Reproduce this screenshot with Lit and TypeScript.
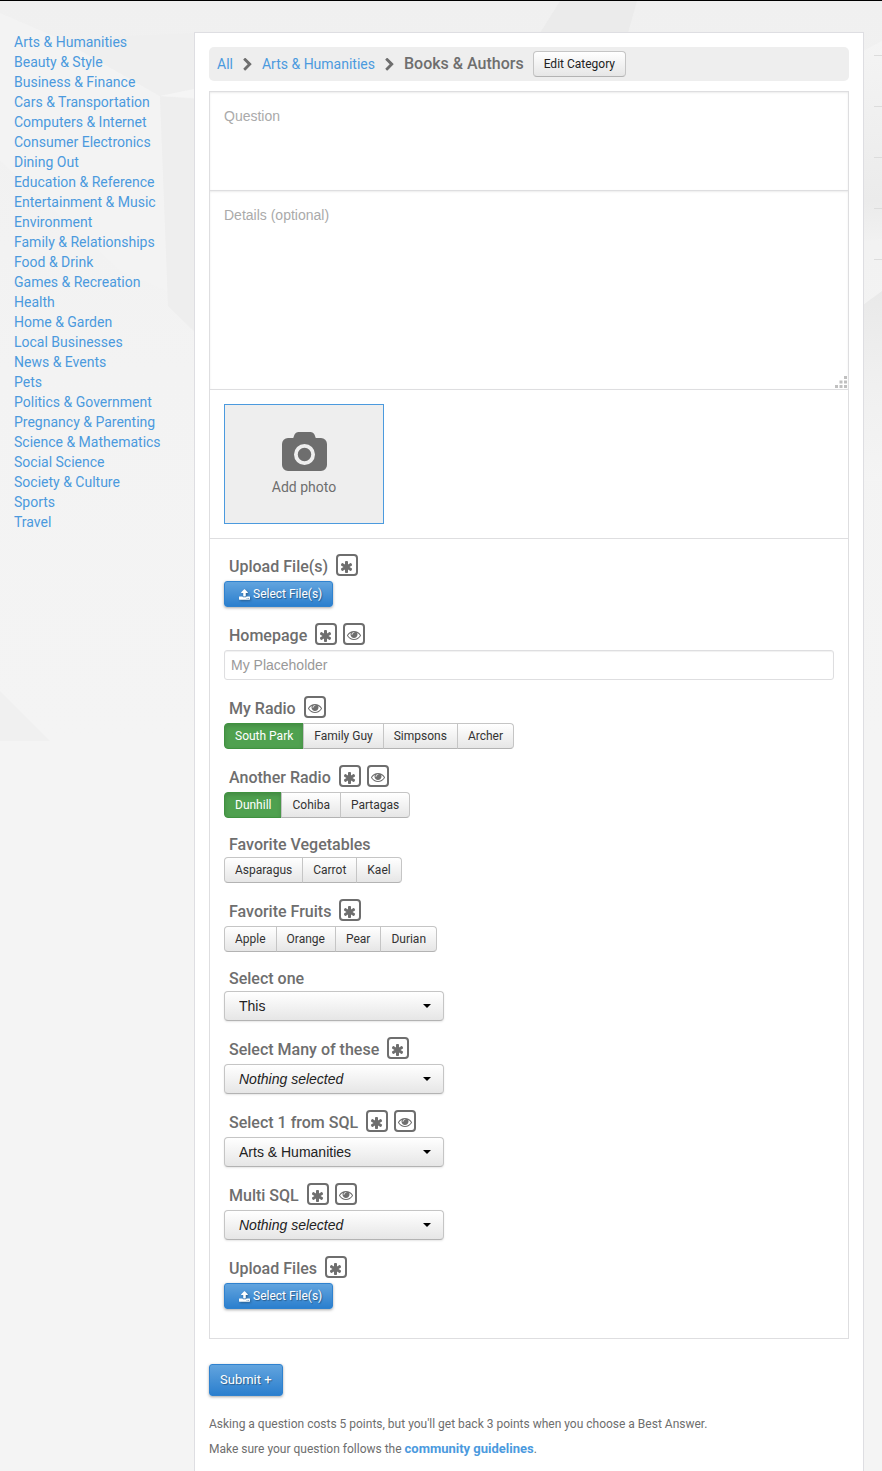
import { LitElement, html, css, svg, nothing } from "lit";
import { customElement, property, state } from "lit/decorators.js";

const CATEGORIES = [
  "Arts & Humanities", "Beauty & Style", "Business & Finance", "Cars & Transportation",
  "Computers & Internet", "Consumer Electronics", "Dining Out", "Education & Reference",
  "Entertainment & Music", "Environment", "Family & Relationships", "Food & Drink",
  "Games & Recreation", "Health", "Home & Garden", "Local Businesses", "News & Events",
  "Pets", "Politics & Government", "Pregnancy & Parenting", "Science & Mathematics",
  "Social Science", "Society & Culture", "Sports", "Travel",
];

const ICONS: Record<string, { box: string; d: string }> = {
  chevron: {
    box: "320 50 1100 1640",
    d: "M1363 877l-742 742q-19 19-45 19t-45-19l-166-166q-19-19-19-45t19-45l531-531-531-531q-19-19-19-45t19-45l166-166q19-19 45-19t45 19l742 742q19 19 19 45t-19 45z",
  },
  camera: {
    box: "-64 0 1920 1664",
    d: "M896 672q119 0 203.500 84.500t84.500 203.500-84.500 203.500-203.500 84.500-203.500-84.500-84.500-203.500 84.500-203.500 203.500-84.500zm704-416q106 0 181 75t75 181v896q0 106-75 181t-181 75h-1408q-106 0-181-75t-75-181v-896q0-106 75-181t181-75h224l51-136q19-49 69.500-84.500t103.500-35.500h512q53 0 103.500 35.500t69.500 84.500l51 136h224zm-704 1152q185 0 316.500-131.500t131.500-316.500-131.500-316.500-316.500-131.500-316.500 131.500-131.500 316.500 131.500 316.500 316.500 131.500z",
  },
  asterisk: {
    box: "192 128 1408 1536",
    d: "M1482 1050q46 26 59.500 77.500t-12.500 97.500l-64 110q-26 46-77.500 59.500t-97.500-12.500l-266-153v307q0 52-38 90t-90 38h-128q-52 0-90-38t-38-90v-307l-266 153q-46 26-97.500 12.500t-77.500-59.500l-64-110q-26-46-12.500-97.500t59.500-77.500l266-154-266-154q-46-26-59.500-77.500t12.500-97.500l64-110q26-46 77.500-59.500t97.500 12.500l266 153v-307q0-52 38-90t90-38h128q52 0 90 38t38 90v307l266-153q46-26 97.500-12.500t77.500 59.500l64 110q26 46 12.500 97.500t-59.500 77.500l-266 154z",
  },
  eye: {
    box: "0 384 1792 1152",
    d: "M1664 960q-152-236-381-353 61 104 61 225 0 185-131.500 316.500t-316.500 131.500-316.500-131.500-131.500-316.500q0-121 61-225-229 117-381 353 133 205 333.500 326.500t434.500 121.500 434.500-121.500 333.500-326.500zm-720-384q0-20-14-34t-34-14q-125 0-214.500 89.500t-89.500 214.500q0 20 14 34t34 14 34-14 14-34q0-86 61-147t147-61q20 0 34-14t14-34zm848 384q0 34-20 69-140 230-376.500 368.500t-499.500 138.500-499.500-139-376.500-368q-20-35-20-69t20-69q140-229 376.500-368t499.500-139 499.500 139 376.500 368q20 35 20 69z",
  },
  upload: {
    box: "64 64 1664 1600",
    d: "M1344 1472q0-26-19-45t-45-19-45 19-19 45 19 45 45 19 45-19 19-45zm256 0q0-26-19-45t-45-19-45 19-19 45 19 45 45 19 45-19 19-45zm128-224v320q0 40-28 68t-68 28h-1472q-40 0-68-28t-28-68v-320q0-40 28-68t68-28h427q21 56 70.500 92t110.500 36h256q61 0 110.500-36t70.500-92h427q40 0 68 28t28 68zm-325-648q-17 40-59 40h-256v448q0 26-19 45t-45 19h-256q-26 0-45-19t-19-45v-448h-256q-42 0-59-40-17-39 14-69l448-448q18-19 45-19t45 19l448 448q31 30 14 69z",
  },
};

const icon = (name: string) => html`<svg class="icon ${name}" viewBox=${ICONS[name].box} aria-hidden="true">
  ${svg`<path d=${ICONS[name].d} />`}
</svg>`;

type Kind = "file" | "text" | "radio" | "checkbox" | "select";

interface Field {
  id: string;
  label: string;
  kind: Kind;
  required?: boolean;
  visible?: boolean;
  options?: string[];
  placeholder?: string;
}

const FIELDS: Field[] = [
  { id: "upload-one", label: "Upload File(s)", kind: "file", required: true },
  { id: "homepage", label: "Homepage", kind: "text", required: true, visible: true, placeholder: "My Placeholder" },
  { id: "my-radio", label: "My Radio", kind: "radio", visible: true, options: ["South Park", "Family Guy", "Simpsons", "Archer"] },
  { id: "another-radio", label: "Another Radio", kind: "radio", required: true, visible: true, options: ["Dunhill", "Cohiba", "Partagas"] },
  { id: "vegetables", label: "Favorite Vegetables", kind: "checkbox", options: ["Asparagus", "Carrot", "Kael"] },
  { id: "fruits", label: "Favorite Fruits", kind: "checkbox", required: true, options: ["Apple", "Orange", "Pear", "Durian"] },
  { id: "select-one", label: "Select one", kind: "select", options: ["This"] },
  { id: "select-many", label: "Select Many of these", kind: "select", required: true },
  { id: "sql-one", label: "Select 1 from SQL", kind: "select", required: true, visible: true, options: ["Arts & Humanities"] },
  { id: "sql-many", label: "Multi SQL", kind: "select", required: true, visible: true },
  { id: "upload-two", label: "Upload Files", kind: "file", required: true },
];

const base = css`
  * { box-sizing: border-box; }
  .icon { display: block; fill: currentColor; flex: none; }
  button, input, select, textarea { font: inherit; margin: 0; }
  .primary {
    display: inline-flex;
    align-items: center;
    color: #fff;
    border: 1px solid #2f82cf;
    border-radius: 3px;
    background: linear-gradient(#62a4de, #2b7fce);
    box-shadow: 0 1px 3px rgba(0, 0, 0, 0.35);
    text-shadow: 1px 1px 1px rgba(0, 0, 0, 0.35);
    cursor: pointer;
  }
`;

@customElement("form-field")
class FormField extends LitElement {
  @property({ attribute: false }) field!: Field;
  @state() private chosen = new Set<string>();

  static styles = [base, css`
    :host { display: block; }
    .head { display: flex; align-items: center; gap: 6px; padding: 0 0 1px 5px; }
    .name { font-size: 16px; line-height: 22px; font-weight: 500; margin-right: 2px; }
    .badge {
      display: flex;
      align-items: center;
      justify-content: center;
      width: 22px;
      height: 22px;
      margin-bottom: 4px;
      padding-top: 3px;
      border: 2px solid #6e6e6e;
      border-radius: 4px;
    }
    .asterisk { width: 12px; height: 12px; }
    .eye { width: 14px; height: 9px; }
    .upload { width: 11px; height: 11px; filter: drop-shadow(1px 1px 1px rgba(0, 0, 0, 0.35)); }
    .file { height: 26px; padding: 0 10px 0 14px; gap: 3px; font-size: 12px; }
    .control { display: flex; }
    .text {
      width: 100%;
      height: 30px;
      padding: 0 6px;
      border: 1px solid #dedee0;
      border-radius: 3px;
      background: #fff;
      box-shadow: inset 0 1px 1px rgba(0, 0, 0, 0.06);
      font-family: "Liberation Sans", Arial, sans-serif;
      font-size: 14px;
      color: #555;
    }
    .text::placeholder { color: #999; opacity: 1; }
    .option {
      display: flex;
      align-items: center;
      height: 26px;
      padding: 0 10px;
      border: 1px solid #c5c5c5;
      border-bottom-color: #b3b3b3;
      background: linear-gradient(#fff, #e6e6e6);
      font-size: 12px;
      color: #333;
      cursor: pointer;
    }
    .option + .option { margin-left: -1px; }
    .option:first-child { border-radius: 4px 0 0 4px; }
    .option:last-child { border-radius: 0 4px 4px 0; }
    .option.on { background: #4fa14f; border-color: #3f923f; color: #fff; box-shadow: inset 0 2px 4px rgba(0, 0, 0, 0.15); }
    .tick { appearance: none; width: 0; height: 0; outline: none; }
    .option:focus-within { outline: 1px dotted #333; }
    .pick { display: grid; width: 220px; align-items: center; }
    .pick > * { grid-area: 1 / 1; }
    .select {
      appearance: none;
      width: 100%;
      height: 30px;
      padding: 0 30px 0 14px;
      border: 1px solid #c5c5c5;
      border-bottom-color: #b3b3b3;
      border-radius: 4px;
      background: linear-gradient(#fff, #e6e6e6);
      box-shadow: 0 1px 2px rgba(0, 0, 0, 0.1);
      font-family: "Liberation Sans", Arial, sans-serif;
      font-size: 14px;
      color: #222;
    }
    .select.empty { font-style: italic; }
    .caret { justify-self: end; width: 8px; height: 4px; margin-right: 13px; fill: #000; pointer-events: none; }
  `];

  willUpdate() {
    if (!this.hasUpdated && this.field.kind === "radio") this.chosen = new Set([this.field.options![0]]);
  }

  private toggle(option: string) {
    const next = new Set(this.field.kind === "radio" ? [] : this.chosen);
    this.chosen.has(option) && this.field.kind === "checkbox" ? next.delete(option) : next.add(option);
    this.chosen = next;
  }

  private control() {
    const f = this.field;
    switch (f.kind) {
      case "file":
        return html`<button class="primary file" id=${f.id} type="button">${icon("upload")}<span>Select File(s)</span></button>`;
      case "text":
        return html`<input class="text" id=${f.id} type="text" placeholder=${f.placeholder ?? ""} />`;
      case "select":
        return html`<div class="pick">
          <select class="select ${f.options ? "" : "empty"}" id=${f.id}>
            ${(f.options ?? ["Nothing selected"]).map((o) => html`<option>${o}</option>`)}
          </select>
          <svg class="caret" viewBox="0 0 8 4" aria-hidden="true"><path d="M0 0h8L4 4z" /></svg>
        </div>`;
      default:
        return f.options!.map((o) => html`<label class="option ${this.chosen.has(o) ? "on" : ""}">
          <input class="tick" type=${f.kind} name=${f.id} .checked=${this.chosen.has(o)} @change=${() => this.toggle(o)} />${o}</label>`);
    }
  }

  render() {
    const f = this.field;
    const grouped = f.kind === "radio" || f.kind === "checkbox";
    return html`
      <div class="head">
        ${grouped
          ? html`<span class="name" id="group-name">${f.label}</span>`
          : html`<label class="name" for=${f.id}>${f.label}</label>`}
        ${f.required ? html`<span class="badge">${icon("asterisk")}</span>` : nothing}
        ${f.visible ? html`<span class="badge">${icon("eye")}</span>` : nothing}
      </div>
      <div class="control" role=${grouped ? "group" : nothing} aria-labelledby=${grouped ? "group-name" : nothing}>${this.control()}</div>
    `;
  }
}

@customElement("app-root")
class AppRoot extends LitElement {
  static styles = [base, css`
    :host {
      display: block;
      position: relative;
      min-height: 100vh;
      border-top: 1px solid #000;
      background: #f4f4f4;
      font-family: Roboto, "Open Sans", sans-serif;
      font-weight: 400;
      font-size: 14px;
      line-height: 20px;
      color: #6e6e6e;
      box-sizing: border-box;
      overflow: hidden;
    }
    a { color: #4b9ade; text-decoration: none; }
    .backdrop { position: absolute; top: 0; left: 0; width: 882px; height: 741px; }
    .layout {
      position: relative;
      display: grid;
      grid-template-columns: 180px minmax(0, 1fr);
      min-height: calc(100vh - 1px);
      padding: 31px 18px 0 14px;
    }
    .categories { list-style: none; margin: 0; padding: 0; white-space: nowrap; }
    .card { padding: 14px 14px 9px; background: #fff; border: 1px solid #dedee2; border-bottom: 0; }
    .crumbs {
      display: flex;
      align-items: center;
      height: 34px;
      padding: 0 8px;
      margin-bottom: 10px;
      border-radius: 5px;
      background: #eee;
    }
    .chevron { width: 9px; height: 13px; margin: 0 10px; }
    .current { font-size: 16px; font-weight: 500; margin-right: 9px; }
    .edit {
      height: 26px;
      padding: 0 10px;
      border: 1px solid #c5c5c5;
      border-bottom-color: #b3b3b3;
      border-radius: 4px;
      background: linear-gradient(#fff, #e6e6e6);
      font-size: 12px;
      color: #222;
    }
    .sheet { border: 1px solid #dedee0; }
    .row { display: grid; border-bottom: 1px solid #dedee0; }
    .area {
      display: block;
      width: 100%;
      padding: 14px;
      border: 0;
      resize: none;
      background: transparent;
      box-shadow: inset 0 1px 2px rgba(0, 0, 0, 0.08);
      font-family: "Liberation Sans", Arial, sans-serif;
      line-height: 20px;
      color: #555;
    }
    .area::placeholder { color: #aaa; opacity: 1; }
    .row > * { grid-area: 1 / 1; }
    .question { height: 98px; }
    .details { height: 198px; }
    .grip { align-self: end; justify-self: end; width: 12px; height: 12px; margin: 1px; fill: #c0c0c0; }
    .photos { padding: 14px; }
    .photo {
      display: flex;
      flex-direction: column;
      align-items: center;
      justify-content: center;
      gap: 6px;
      width: 160px;
      height: 120px;
      border: 1px solid #4b9ade;
      background: #eee;
      color: #6e6e6e;
      line-height: 20px;
    }
    .camera { width: 45px; height: 39px; }
    .fields { display: flex; flex-direction: column; gap: 16px; padding: 15px 14px 29px; }
    .submit { height: 32px; margin: 25px 0 16px; padding: 0 10px; font-size: 13px; }
    .note { margin: 0; font-size: 12px; line-height: 25px; }
    .strong { font-size: 13px; line-height: 20px; font-weight: 700; }
  `];

  render() {
    return html`
      <svg class="backdrop" viewBox="0 0 882 741" aria-hidden="true">
        <defs>
          <linearGradient id="fade" x1="0" y1="0" x2="0" y2="1">
            <stop offset="0" stop-color="#f0f0f0" /><stop offset="0.5" stop-color="#f3f3f3" /><stop offset="1" stop-color="#f4f4f4" />
          </linearGradient>
          <linearGradient id="side" x1="0" y1="0" x2="0" y2="1">
            <stop offset="0" stop-color="#f4f4f4" /><stop offset="0.8" stop-color="#ebebeb" /><stop offset="1" stop-color="#f1f1f1" />
          </linearGradient>
          <linearGradient id="lower" x1="0" y1="0" x2="0" y2="1">
            <stop offset="0" stop-color="#e9e9e9" /><stop offset="0.5" stop-color="#f0f0f0" /><stop offset="1" stop-color="#f4f4f4" />
          </linearGradient>
        </defs>
        <rect width="882" height="741" fill="url(#fade)" />
        <path d="M0 12L60 38 160 95 168 290 120 270 0 160z" fill="#f3f3f3" />
        <path d="M60 38L194 32V88L160 95z" fill="#efefef" />
        <path d="M160 95L194 98V330L168 305z" fill="#eeeeee" />
        <path d="M160 95L194 88V97z" fill="#f5f5f5" />
        <path d="M560 0H637L628 32H540z" fill="#ebebeb" />
        <path d="M863 50L882 40V238L863 240z" fill="url(#side)" />
        <path d="M863 304L882 290V480H863z" fill="url(#lower)" />
        <path d="M0 690L50 740H0z" fill="#f0f0f0" />
        <path d="M874 54.500h8m-8 51h8m-8 51h8m-8 51h8m-8 51h8" stroke="#dcdcdc" />
      </svg>
      <div class="layout">
        <nav aria-label="Categories">
          <ul class="categories">${CATEGORIES.map((c) => html`<li><a href="#">${c}</a></li>`)}</ul>
        </nav>
        <main class="card">
          <nav class="crumbs" aria-label="Breadcrumb">
            <a href="#">All</a>${icon("chevron")}<a href="#">Arts &amp; Humanities</a>${icon("chevron")}
            <span class="current">Books &amp; Authors</span>
            <button class="edit" type="button">Edit Category</button>
          </nav>
          <form @submit=${(e: Event) => e.preventDefault()}>
            <div class="sheet">
              <div class="row"><textarea class="area question" aria-label="Question" placeholder="Question"></textarea></div>
              <div class="row">
                <textarea class="area details" aria-label="Details" placeholder="Details (optional)"></textarea>
                <svg class="grip" viewBox="0 0 12 12" aria-hidden="true">
                  <path d="M9 0h3v3h-3zM4.500 4.500h3v3h-3zM9 4.500h3v3h-3zM0 9h3v3h-3zM4.500 9h3v3h-3zM9 9h3v3h-3z" />
                </svg>
              </div>
              <div class="row photos"><button class="photo" type="button">${icon("camera")}<span>Add photo</span></button></div>
              <div class="fields">${FIELDS.map((f) => html`<form-field .field=${f}></form-field>`)}</div>
            </div>
            <button class="primary submit" type="submit">Submit +</button>
          </form>
          <p class="note">Asking a question costs 5 points, but you'll get back 3 points when you choose a Best Answer.</p>
          <p class="note">Make sure your question follows the <a class="strong" href="#">community guidelines</a>.</p>
        </main>
      </div>
    `;
  }
}
